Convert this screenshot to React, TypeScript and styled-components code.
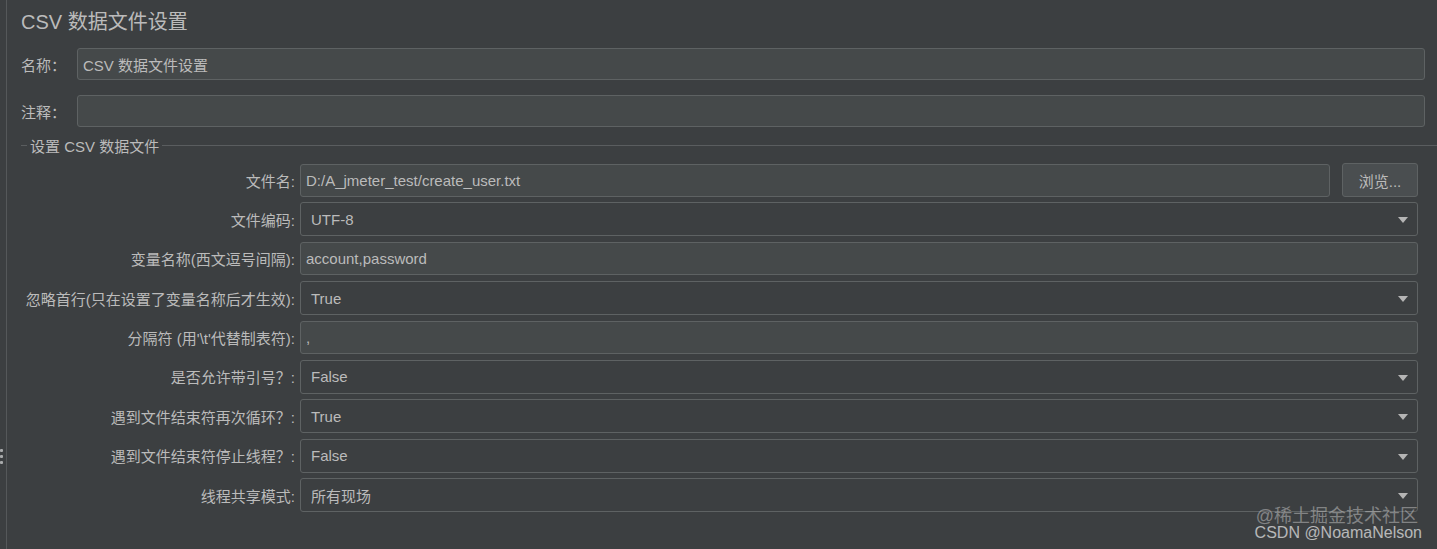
import React from "react";
import styled, { createGlobalStyle } from "styled-components";

const Global = createGlobalStyle`
  html, body { margin: 0; padding: 0; background: #3c3f41; }
  body {
    font-family: "Liberation Sans", "Noto Sans CJK SC", sans-serif;
    color: #bbbbbb;
    overflow: hidden;
  }
`;

const Page = styled.div`
  position: relative;
  display: flex;
  width: 1437px;
  height: 549px;
  background: #3c3f41;
`;

const Splitter = styled.div`
  width: 7px;
  border-right: 1px solid #55585a;
  display: flex;
  flex-direction: column;
  align-items: flex-start;
  padding-top: 449px;
  gap: 3px;
  box-sizing: border-box;
`;

const Dot = styled.span`
  width: 3px;
  height: 3px;
  background: #a9abac;
  border-radius: 1px;
`;

const Main = styled.div`
  flex: 1;
  display: flex;
  flex-direction: column;
  padding: 10px 12px 0 13px;
`;

const Title = styled.div`
  font-size: 20px;
  line-height: 24px;
  height: 24px;
  margin-left: 1px;
  color: #bbbbbb;
`;

const TopRow = styled.div<{ $mt: number }>`
  display: flex;
  align-items: center;
  margin-top: ${(p) => p.$mt}px;
  height: 32px;
`;

const TopLabel = styled.label`
  width: 56px;
  padding-left: 1px;
  font-size: 15px;
  color: #bbbbbb;
`;

const TextBox = styled.div<{ $pad?: number; $h?: number }>`
  flex: 1;
  height: ${(p) => p.$h ?? 32}px;
  box-sizing: border-box;
  background: #45494a;
  border: 1px solid #5e6263;
  border-radius: 3px;
  display: flex;
  align-items: center;
  padding-left: ${(p) => p.$pad ?? 5}px;
  font-size: 15px;
  color: #bbbbbb;
  white-space: nowrap;
`;

const Legend = styled.div`
  display: flex;
  align-items: center;
  height: 20px;
  margin-top: 8px;
  margin-left: 1px;
  font-size: 15px;
  color: #bbbbbb;
  &::before {
    content: "";
    width: 6px;
    height: 1px;
    background: #5a5d5f;
    margin-right: 3px;
  }
  &::after {
    content: "";
    flex: 1;
    height: 1px;
    background: #5a5d5f;
    margin-left: 3px;
    margin-right: -12px;
  }
`;

const Form = styled.div`
  display: grid;
  grid-template-columns: 275px 1fr;
  column-gap: 5px;
  row-gap: 5.4px;
  grid-auto-rows: 34px;
  margin-top: 8px;
  margin-right: 7px;
`;

const FieldLabel = styled.label`
  display: flex;
  align-items: center;
  justify-content: flex-end;
  font-size: 15px;
  color: #bbbbbb;
  white-space: nowrap;
`;

const FileCell = styled.div`
  display: flex;
  gap: 12px;
  align-items: center;
`;

const Button = styled.div`
  width: 76px;
  height: 34px;
  box-sizing: border-box;
  background: #4a4e50;
  border: 1px solid #5e6263;
  border-radius: 3px;
  display: flex;
  align-items: center;
  justify-content: center;
  font-size: 15px;
  color: #bbbbbb;
`;

const Combo = styled.div`
  height: 34px;
  box-sizing: border-box;
  background: #3c3f41;
  border: 1px solid #5e6263;
  border-radius: 3px;
  display: flex;
  align-items: center;
  justify-content: space-between;
  padding: 0 9px 0 10px;
  font-size: 15px;
  color: #bbbbbb;
`;

const Arrow = styled.span`
  width: 0;
  height: 0;
  border-left: 5px solid transparent;
  border-right: 5px solid transparent;
  border-top: 6px solid #b5b5b5;
  margin-top: 2px;
`;

const InputCell = styled.div`
  display: flex;
  align-items: center;
`;

const Watermark = styled.div`
  position: absolute;
  right: 15px;
  bottom: 8px;
  display: flex;
  flex-direction: column;
  align-items: flex-end;
  color: rgba(225, 225, 225, 0.75);
  pointer-events: none;
`;

const WmTop = styled.span`
  font-size: 18px;
  line-height: 16px;
  margin-right: 4px;
  color: rgba(200, 200, 200, 0.5);
`;

const WmBottom = styled.span`
  font-size: 16px;
  line-height: 17px;
`;

type Row =
  | { kind: "text"; label: string; value: string }
  | { kind: "combo"; label: string; value: string }
  | { kind: "file"; label: string; value: string };

const rows: Row[] = [
  { kind: "file", label: "文件名:", value: "D:/A_jmeter_test/create_user.txt" },
  { kind: "combo", label: "文件编码:", value: "UTF-8" },
  { kind: "text", label: "变量名称(西文逗号间隔):", value: "account,password" },
  { kind: "combo", label: "忽略首行(只在设置了变量名称后才生效):", value: "True" },
  { kind: "text", label: "分隔符 (用'\\t'代替制表符):", value: "," },
  { kind: "combo", label: "是否允许带引号？:", value: "False" },
  { kind: "combo", label: "遇到文件结束符再次循环？:", value: "True" },
  { kind: "combo", label: "遇到文件结束符停止线程？:", value: "False" },
  { kind: "combo", label: "线程共享模式:", value: "所有现场" },
];

export default function App() {
  return (
    <>
      <Global />
      <Page>
        <Splitter>
          <Dot />
          <Dot />
          <Dot />
        </Splitter>
        <Main>
          <Title>CSV 数据文件设置</Title>
          <TopRow $mt={14}>
            <TopLabel>名称：</TopLabel>
            <TextBox $pad={5}>CSV 数据文件设置</TextBox>
          </TopRow>
          <TopRow $mt={15}>
            <TopLabel>注释：</TopLabel>
            <TextBox />
          </TopRow>
          <Legend>设置 CSV 数据文件</Legend>
          <Form>
            {rows.map((r) => (
              <React.Fragment key={r.label}>
                <FieldLabel>{r.label}</FieldLabel>
                {r.kind === "file" && (
                  <FileCell>
                    <TextBox $h={33}>{r.value}</TextBox>
                    <Button>浏览...</Button>
                  </FileCell>
                )}
                {r.kind === "text" && (
                  <InputCell>
                    <TextBox $h={33}>{r.value}</TextBox>
                  </InputCell>
                )}
                {r.kind === "combo" && (
                  <Combo>
                    <span>{r.value}</span>
                    <Arrow />
                  </Combo>
                )}
              </React.Fragment>
            ))}
          </Form>
        </Main>
        <Watermark>
          <WmTop>@稀土掘金技术社区</WmTop>
          <WmBottom>CSDN @NoamaNelson</WmBottom>
        </Watermark>
      </Page>
    </>
  );
}
